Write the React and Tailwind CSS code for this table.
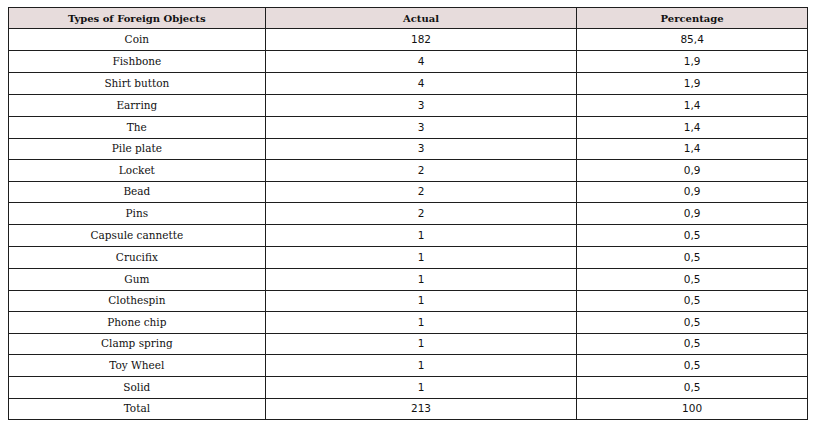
import React from "react";

const rows = [
  ["Coin", "182", "85,4"],
  ["Fishbone", "4", "1,9"],
  ["Shirt button", "4", "1,9"],
  ["Earring", "3", "1,4"],
  ["The", "3", "1,4"],
  ["Pile plate", "3", "1,4"],
  ["Locket", "2", "0,9"],
  ["Bead", "2", "0,9"],
  ["Pins", "2", "0,9"],
  ["Capsule cannette", "1", "0,5"],
  ["Crucifix", "1", "0,5"],
  ["Gum", "1", "0,5"],
  ["Clothespin", "1", "0,5"],
  ["Phone chip", "1", "0,5"],
  ["Clamp spring", "1", "0,5"],
  ["Toy Wheel", "1", "0,5"],
  ["Solid", "1", "0,5"],
  ["Total", "213", "100"],
];

// row heights measured off the reference (border included)
const tall = [true, true, true, true, true, false, true, false, true, true, true, true, false, true, false, true, true, false];

const serif = "font-['DejaVu_Serif',serif]";
const sans = "font-['DejaVu_Sans','Verdana',sans-serif]";

const Row = ({ cells, head, isTall }) => (
  <div
    className={`flex border-b border-[#1e1e1e] ${head ? "h-[21px] bg-[#e7dcdc]" : isTall ? "h-[22px]" : "h-[21px]"}`}
  >
    <div className={`w-[257px] flex items-center justify-center border-r border-[#1e1e1e] text-[#111] ${serif} ${head ? "font-bold text-[10px]" : "text-[10.5px]"}`}>
      {cells[0]}
    </div>
    <div className={`w-[312px] flex items-center justify-center border-r border-[#1e1e1e] text-[#111] ${head ? `${serif} text-[10px] font-bold` : `${sans} text-[10.5px]`}`}>
      {cells[1]}
    </div>
    <div className={`w-[230px] flex items-center justify-center text-[#111] ${head ? `${serif} text-[10px] font-bold` : `${sans} text-[10.5px]`}`}>
      {cells[2]}
    </div>
  </div>
);

export default function App() {
  return (
    <div className="w-[815px] h-[431px] bg-white pt-[7px] pl-[8px]">
      <div className="w-[800px] border-t border-l border-r border-[#1e1e1e]">
        <Row cells={["Types of Foreign Objects", "Actual", "Percentage"]} head />
        {rows.map((r, i) => (
          <Row key={r[0]} cells={r} isTall={tall[i]} />
        ))}
      </div>
    </div>
  );
}
